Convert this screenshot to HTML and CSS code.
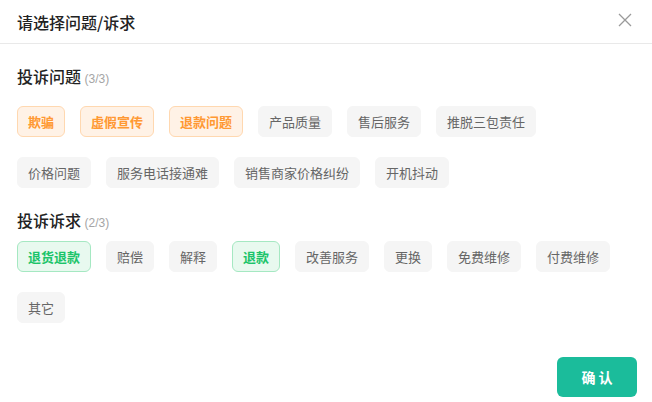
FILE: index.html
```html
<!DOCTYPE html>
<html lang="zh-CN">
<head>
    <meta charset="UTF-8">
    <meta name="viewport" content="width=device-width, initial-scale=1.0">
    <title>请选择问题/诉求</title>
    <link rel="stylesheet" href="styles.css">
</head>
<body>
    <div class="modal">
        <div class="header">
            <h1>请选择问题/诉求</h1>
            <span class="close">
                <svg width="14" height="14" viewBox="0 0 14 14">
                    <path d="M1 1 L13 13 M13 1 L1 13" stroke="#9a9a9a" stroke-width="1.3" fill="none"/>
                </svg>
            </span>
        </div>

        <div class="content">
            <h2 class="section-title first">投诉问题 <span class="count">(3/3)</span></h2>
            <div class="tags">
                <span class="tag warn">欺骗</span>
                <span class="tag warn">虚假宣传</span>
                <span class="tag warn">退款问题</span>
                <span class="tag">产品质量</span>
                <span class="tag">售后服务</span>
                <span class="tag">推脱三包责任</span>
                <span class="tag">价格问题</span>
                <span class="tag">服务电话接通难</span>
                <span class="tag">销售商家价格纠纷</span>
                <span class="tag">开机抖动</span>
            </div>

            <h2 class="section-title second">投诉诉求 <span class="count">(2/3)</span></h2>
            <div class="tags">
                <span class="tag ok">退货退款</span>
                <span class="tag">赔偿</span>
                <span class="tag">解释</span>
                <span class="tag ok">退款</span>
                <span class="tag">改善服务</span>
                <span class="tag">更换</span>
                <span class="tag">免费维修</span>
                <span class="tag">付费维修</span>
                <span class="tag">其它</span>
            </div>
        </div>

        <div class="footer">
            <button class="button">确 认</button>
        </div>
    </div>
</body>
</html>
```

FILE: styles.css
```css
body {
    margin: 0;
    background: #fff;
    font-family: "Noto Sans CJK SC", "Noto Sans", sans-serif;
    color: #222;
}
.modal {
    width: 652px;
    height: 402px;
    display: flex;
    flex-direction: column;
}
.header {
    height: 43px;
    border-bottom: 1px solid #e9e9e9;
    padding: 0 20px 0 17px;
    display: flex;
    align-items: center;
    justify-content: space-between;
}
.header h1 {
    margin: 0;
    font-size: 16px;
    font-weight: 500;
    line-height: 24px;
    color: #222;
}
.close {
    display: flex;
    width: 14px;
    height: 14px;
    margin-top: -4px;
}
.content {
    padding: 0 35px 0 17px;
}
.section-title {
    margin: 0;
    height: 24px;
    font-size: 16px;
    font-weight: 500;
    line-height: 24px;
    color: #222;
}
.section-title.first {
    margin-top: 20px;
    margin-bottom: 18px;
}
.section-title.second {
    margin-top: 20px;
    margin-bottom: 9px;
}
.count {
    font-size: 12px;
    font-weight: 400;
    line-height: 1;
    color: #a5a5a5;
    font-family: "Liberation Sans", "Noto Sans CJK SC", sans-serif;
}
.tags {
    display: flex;
    flex-wrap: wrap;
    column-gap: 15px;
    row-gap: 20px;
}
.tag {
    display: inline-block;
    height: 29px;
    line-height: 29px;
    padding: 0 10px;
    border: 1px solid #f5f5f5;
    border-radius: 6px;
    background-color: #f5f5f5;
    color: #666;
    font-size: 13px;
}
.tag.warn {
    background-color: #fff2e6;
    border-color: #ffd8b0;
    color: #ff9933;
    font-weight: 700;
}
.tag.ok {
    background-color: #e8f9ef;
    border-color: #a5e8c2;
    color: #1bc46a;
    font-weight: 700;
}
.footer {
    margin-top: auto;
    padding: 0 15px 5px 0;
    display: flex;
    justify-content: flex-end;
}
.button {
    width: 80px;
    height: 40px;
    border: none;
    border-radius: 6px;
    background-color: #1bbc9b;
    color: #fff;
    font-family: "Noto Sans CJK SC", sans-serif;
    font-size: 14px;
    font-weight: 700;
    cursor: pointer;
}
```
